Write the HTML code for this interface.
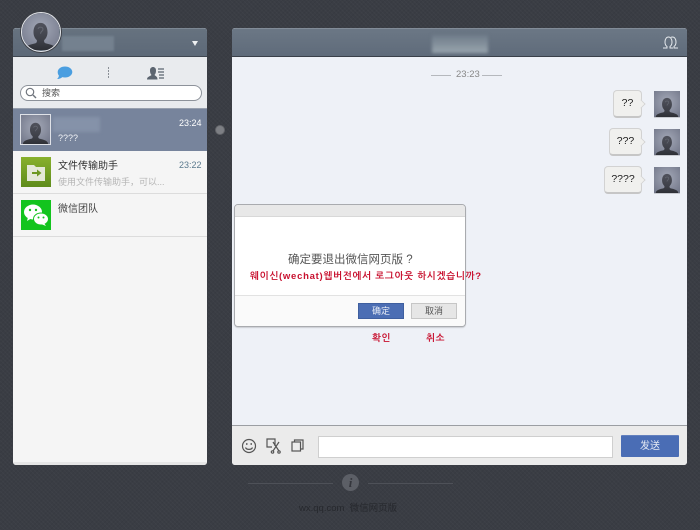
<!DOCTYPE html>
<html lang="zh">
<head>
<meta charset="utf-8">
<title>微信网页版</title>
<style>
*{box-sizing:border-box}
html,body{margin:0;padding:0;background:#3a3d44}
body{width:700px;height:530px;overflow:hidden;position:relative;font-family:"Liberation Sans","Noto Sans CJK SC",sans-serif;font-size:12px;color:#333}
#w{position:absolute;left:0;top:0;width:700px;height:530px;overflow:hidden;background-color:#3a3d44;background-image:repeating-linear-gradient(45deg,rgba(255,255,255,.018) 0 1px,transparent 1px 3px),repeating-linear-gradient(-45deg,rgba(0,0,0,.05) 0 1px,transparent 1px 3px);filter:blur(.3px)}
.a{position:absolute}
.t{position:absolute;white-space:nowrap;line-height:14px}
.av{position:absolute;display:block}
.bub{position:absolute;height:28px;background:#f0f0ee;border:1px solid #d2d2d2;border-bottom:2px solid #c6c6c6;border-radius:4px;text-align:center;line-height:25px;font-size:10.500px;color:#222}
.bub:after{content:"";position:absolute;right:-4px;top:9px;width:7px;height:7px;background:#f0f0ee;border-top:1px solid #d2d2d2;border-right:1px solid #d2d2d2;transform:rotate(45deg) scale(.8)}
.ko{font-family:"Liberation Sans","NanumGothic","Noto Sans CJK KR",sans-serif;color:#c8102e;font-weight:bold;font-size:9.500px;letter-spacing:.74px}
</style>
</head>
<body>
<svg width="0" height="0" style="position:absolute">
<symbol id="p" viewBox="0 0 30 30">
<defs>
<radialGradient id="g" cx="50%" cy="42%" r="72%"><stop offset="0" stop-color="#a4a9b8"/><stop offset="1" stop-color="#727789"/></radialGradient>
<linearGradient id="s" x1="0" y1="0" x2="0" y2="1"><stop offset="0" stop-color="#50525c"/><stop offset=".7" stop-color="#3c3e46"/><stop offset="1" stop-color="#2e3036"/></linearGradient>
</defs>
<rect width="30" height="30" fill="url(#g)"/>
<path d="M2 30c0-3.500 5-4.500 9-5.500 1-.4 1.300-1.500 1-2.500-1.600-1.500-2.700-3.700-2.700-6.500C9.300 11 11.500 8 15 8s5.700 3 5.700 7.500c0 2.800-1.100 5-2.700 6.500-.3 1 0 2.100 1 2.500 4 1 9 2 9 5.500z" fill="url(#s)"/>
<path d="M13 13c.5-2 4-2 4 .3 0 1.500-2 1.500-2 3.500" fill="none" stroke="#62656f" stroke-width=".9"/>
</symbol>
</svg>
<div id="w">

<!-- left panel -->
<div class="a" style="left:13px;top:28px;width:194px;height:437px;background:#f5f5f5;border-radius:3px;overflow:hidden">
  <div class="a" style="left:0;top:0;width:194px;height:29px;background:linear-gradient(#66727f,#5d6978);border-top:1px solid #7d8894;border-bottom:1px solid #3f4650"></div>
  <div class="a" style="left:49px;top:8px;width:52px;height:15px;background:#74818f;filter:blur(1px)"></div>
  <div class="a" style="left:179px;top:13px;width:0;height:0;border-left:3.500px solid transparent;border-right:3.500px solid transparent;border-top:5px solid #eef0f2"></div>
  <div class="a" style="left:0;top:29px;width:194px;height:51px;background:#e9ebee"></div>
  <div class="a" style="left:0;top:80px;width:194px;height:43px;background:#77849c;border-top:1px solid #98a0ae"></div>
  <div class="a" style="left:40px;top:89px;width:47px;height:15px;background:#8592a9;filter:blur(1.500px)"></div>
  <div class="a" style="left:0;top:165px;width:194px;height:1px;background:#dcdcdc"></div>
  <div class="a" style="left:0;top:208px;width:194px;height:1px;background:#dcdcdc"></div>
  <div class="a" style="left:0;top:434px;width:194px;height:3px;background:#e6e6e6"></div>
</div>
<!-- avatar top -->
<div class="a" style="left:21px;top:12px;width:40px;height:40px;border-radius:50%;border:1.500px solid #e4e6ea;overflow:hidden;box-shadow:0 0 0 1px #3c3f46">
  <svg class="av" style="left:0;top:0" width="37" height="37"><use href="#p"/></svg>
</div>
<!-- tab icons -->
<svg class="a" style="left:56px;top:66px" width="17" height="14" viewBox="0 0 17 14"><path d="M9 .5c4 0 7.300 2.400 7.300 5.500S13 11.500 9 11.500c-1 0-2-.2-2.800-.4C5.500 12 3.500 13 1 13c1.300-1 1.800-2.200 1.900-3.400C2 8.500 1.700 7.300 1.700 6 1.700 2.900 5 .5 9 .5z" fill="#4a9ee0"/></svg>
<div class="a" style="left:108px;top:67px;width:1px;height:11px;background:repeating-linear-gradient(#8a8f96 0 2px,transparent 2px 3px)"></div>
<svg class="a" style="left:147px;top:66px" width="18" height="14" viewBox="0 0 18 14"><path d="M0 13.500c0-3 3-3 4.500-4.500C3.500 8 3 6.500 3 4.500 3 2 4.500 1 6 1s3 1 3 3.500c0 2-.5 3.500-1.500 4.500 1.500 1.500 3 1.500 3 4.500z" fill="#5c6570"/><path d="M11 3h6M11 6h6M12 9h5M12 12h5" stroke="#5c6570" stroke-width="1.200"/></svg>
<!-- search -->
<div class="a" style="left:20px;top:85px;width:182px;height:16px;background:#fff;border:1px solid #8d929a;border-radius:8px"></div>
<svg class="a" style="left:25px;top:87px" width="12" height="12" viewBox="0 0 12 12"><circle cx="5" cy="5" r="3.700" fill="none" stroke="#6f747c" stroke-width="1.200"/><path d="M8 8l3 3" stroke="#6f747c" stroke-width="1.400"/></svg>
<div class="t" style="left:42px;top:86px;font-size:9px;color:#555">搜索</div>

<!-- rows -->
<div class="a" style="left:20px;top:114px;width:31px;height:31px;border:1px solid #dfe2e8;overflow:hidden"><svg class="av" width="29" height="29"><use href="#p"/></svg></div>
<div class="t" style="left:58px;top:131px;font-size:9px;color:#f0f2f5">????</div>
<div class="t" style="left:179px;top:116px;font-size:9px;color:#fff">23:24</div>

<svg class="a" style="left:21px;top:157px" width="30" height="30" viewBox="0 0 30 30"><defs><linearGradient id="f" x1="0" y1="0" x2="0" y2="1"><stop offset="0" stop-color="#88b02d"/><stop offset="1" stop-color="#5f8c1c"/></linearGradient></defs><rect width="30" height="30" fill="url(#f)"/><path d="M6 8h7l2 2h9v14H6z" fill="#e4e8d8"/><path d="M11 15h5v-2.500l4.500 3.500-4.500 3.500V17h-5z" fill="#6c9720"/></svg>
<div class="t" style="left:58px;top:160px;font-size:10px;color:#333">文件传输助手</div>
<div class="t" style="left:58px;top:175px;font-size:9px;color:#b5b5b5">使用文件传输助手，可以...</div>
<div class="t" style="left:179px;top:158px;font-size:9px;color:#5b7a8e">23:22</div>

<svg class="a" style="left:21px;top:200px" width="30" height="30" viewBox="0 0 30 30"><rect width="30" height="30" fill="#13c41e"/><ellipse cx="12" cy="12" rx="9" ry="7.500" fill="#fff"/><path d="M7 17l-1 4 5-3z" fill="#fff"/><ellipse cx="20" cy="19" rx="7.500" ry="6" fill="#fff" stroke="#13c41e"/><path d="M23 23l2 3-5-2z" fill="#fff"/><circle cx="9" cy="10" r="1.200" fill="#13c41e"/><circle cx="15" cy="10" r="1.200" fill="#13c41e"/><circle cx="17.500" cy="17.500" r="1" fill="#13c41e"/><circle cx="22.500" cy="17.500" r="1" fill="#13c41e"/></svg>
<div class="t" style="left:58px;top:203px;font-size:10px;color:#444">微信团队</div>

<!-- handle -->
<div class="a" style="left:215px;top:125px;width:10px;height:10px;border-radius:50%;background:#7d7f84;border:1px solid #63656a"></div>

<!-- right panel -->
<div class="a" style="left:232px;top:28px;width:455px;height:437px;background:#eef1f7;border-radius:3px;overflow:hidden">
  <div class="a" style="left:0;top:0;width:455px;height:29px;background:linear-gradient(#6b7785,#5f6b7a);border-top:1px solid #828c98;border-bottom:1px solid #3a4049"></div>
  <div class="a" style="left:200px;top:7px;width:56px;height:18px;background:linear-gradient(#6f7c8a,#98a4ad);filter:blur(1.500px)"></div>
  <div class="a" style="left:0;top:397px;width:455px;height:40px;background:#ebebeb;border-top:1px solid #9b9ea3"></div>
</div>
<svg class="a" style="left:662px;top:36px" width="17" height="13" viewBox="0 0 17 13" fill="none" stroke="#e6eaee" stroke-width="1"><path d="M1 12h4v-1.500C3.500 9.500 3 8 3 6c0-3 1.500-5 3.500-5S10 3 10 6c0 2-.5 3.500-2 4.500V12h3"/><path d="M9 1.300C9.500 1 10 1 10.500 1 12.500 1 14 3 14 6c0 2-.5 3.500-2 4.500V12h4"/></svg>

<!-- time -->
<div class="a" style="left:431px;top:75px;width:20px;height:1px;background:#b5b8bd"></div>
<div class="t" style="left:456px;top:68px;font-size:9.500px;color:#888">23:23</div>
<div class="a" style="left:482px;top:75px;width:20px;height:1px;background:#b5b8bd"></div>

<!-- messages -->
<div class="bub" style="left:613px;top:90px;width:29px">??</div>
<div class="bub" style="left:609px;top:128px;width:33px">???</div>
<div class="bub" style="left:604px;top:166px;width:38px">????</div>
<svg class="av" style="left:654px;top:91px;border-bottom:1px solid #c8cad0" width="26" height="27"><use href="#p"/></svg>
<svg class="av" style="left:654px;top:129px;border-bottom:1px solid #c8cad0" width="26" height="27"><use href="#p"/></svg>
<svg class="av" style="left:654px;top:167px;border-bottom:1px solid #c8cad0" width="26" height="27"><use href="#p"/></svg>

<!-- dialog -->
<div class="a" style="left:234px;top:204px;width:232px;height:123px;background:#fff;border:1px solid #a9abaf;border-radius:4px;box-shadow:0 1px 1px rgba(0,0,0,.15);overflow:hidden">
  <div class="a" style="left:0;top:0;width:230px;height:12px;background:#e8e8e8;border-bottom:1px solid #d8d8d8"></div>
  <div class="a" style="left:0;top:90px;width:230px;height:31px;background:#fafafa;border-top:1px solid #e2e2e2"></div>
</div>
<div class="t" style="left:288px;top:253px;font-size:11.500px;color:#555">确定要退出微信网页版 ?</div>
<div class="t ko" style="left:250px;top:270px">웨이신(wechat)웹버전에서 로그아웃 하시겠습니까?</div>
<div class="a" style="left:358px;top:303px;width:46px;height:16px;background:#4c6eb4;border:1px solid #3f5f9f;color:#e8edf6;font-size:9px;line-height:14px;text-align:center">确定</div>
<div class="a" style="left:411px;top:303px;width:46px;height:16px;background:#e6e6e6;border:1px solid #c6c6c6;color:#555;font-size:9px;line-height:14px;text-align:center">取消</div>
<div class="t ko" style="left:372px;top:332px">확인</div>
<div class="t ko" style="left:426px;top:332px">취소</div>

<!-- toolbar -->
<svg class="a" style="left:241px;top:438px" width="16" height="16" viewBox="0 0 16 16" fill="none" stroke="#555" stroke-width="1.200"><circle cx="8" cy="8" r="6.500"/><path d="M4.500 9.500c1 2.500 6 2.500 7 0"/><path d="M5.800 5v2M10.200 5v2"/></svg>
<svg class="a" style="left:266px;top:438px" width="15" height="16" viewBox="0 0 15 16" fill="none" stroke="#555" stroke-width="1.200"><path d="M9 8V1H1v8h5"/><path d="M7 4l6 9M13 4l-6 9"/><circle cx="6.500" cy="14" r="1.200"/><circle cx="13" cy="14" r="1.200"/></svg>
<svg class="a" style="left:291px;top:439px" width="13" height="13" viewBox="0 0 13 13" fill="none" stroke="#555" stroke-width="1.200"><rect x="1" y="3" width="8.500" height="9" fill="#ebebeb"/><path d="M3.500 3V1h8.500v9h-2.500"/></svg>
<div class="a" style="left:318px;top:436px;width:295px;height:22px;background:#fff;border:1px solid #cfcfcf"></div>
<div class="a" style="left:621px;top:435px;width:58px;height:22px;background:#4a6db5;border-top:1px solid #6380bd;color:#e6ebf5;font-size:10px;line-height:22px;text-align:center;border-radius:1px">发送</div>

<!-- footer -->
<div class="a" style="left:248px;top:483px;width:85px;height:1px;background:#4e5158"></div>
<div class="a" style="left:368px;top:483px;width:85px;height:1px;background:#4e5158"></div>
<div class="a" style="left:342px;top:474px;width:17px;height:17px;border-radius:50%;background:#5c5f66;color:#34363c;font:italic bold 13px/17px 'Liberation Serif',serif;text-align:center">i</div>
<div class="t" style="left:299px;top:502px;font-size:9.500px;color:#26282d">wx.qq.com&nbsp;&nbsp;微信网页版</div>
</div>
</body>
</html>
